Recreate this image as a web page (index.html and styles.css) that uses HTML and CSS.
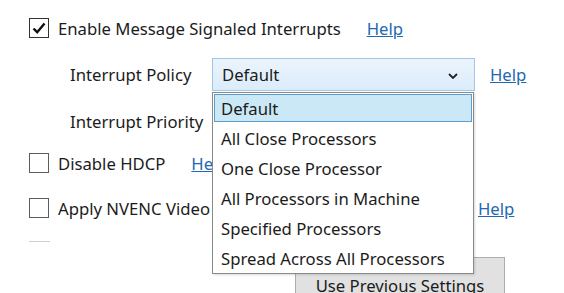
FILE: index.html
```html
<!DOCTYPE html>
<html lang="en">
<head>
  <meta charset="UTF-8" />
  <title>Interrupt Settings</title>
  <link rel="stylesheet" href="styles.css">
</head>
<body>
  <div class="settings">
    <div class="row check-row first">
      <span class="box checked">
        <svg width="16" height="16" viewBox="0 0 16 16"><path d="M2.5 8.5 L6.2 12.2 L13.5 3.5" fill="none" stroke="#111" stroke-width="2.4"/></svg>
      </span>
      <span class="label">Enable Message Signaled Interrupts</span>
      <a class="help gap-wide" href="#">Help</a>
    </div>

    <div class="row sub-row policy">
      <span class="sub-label">Interrupt Policy</span>
      <div class="combo">
        <span>Default</span>
        <svg class="chev" width="10" height="6" viewBox="0 0 10 6"><path d="M1 1 L5 5 L9 1" fill="none" stroke="#222" stroke-width="1.8"/></svg>
        <ul class="dropdown">
          <li class="selected">Default</li>
          <li>All Close Processors</li>
          <li>One Close Processor</li>
          <li>All Processors in Machine</li>
          <li>Specified Processors</li>
          <li>Spread Across All Processors</li>
        </ul>
      </div>
      <a class="help gap-narrow" href="#">Help</a>
    </div>

    <div class="row sub-row priority">
      <span class="sub-label">Interrupt Priority</span>
    </div>

    <div class="row check-row hdcp">
      <span class="box"></span>
      <span class="label">Disable HDCP</span>
      <a class="help gap-wide" href="#">Help</a>
    </div>

    <div class="row check-row nvenc">
      <span class="box"></span>
      <span class="label nvenc-label">Apply NVENC Video Encoder Fix</span>
      <a class="help nvenc-help" href="#">Help</a>
    </div>

    <div class="cut-line"></div>

    <div class="actions">
      <button class="prev-btn">Use Previous Settings</button>
    </div>
  </div>
</body>
</html>
```

FILE: styles.css
```css
:root {
  --text: #1b1b1b;
  --link: #2169b3;
  --box-border: #5c5c5c;
}

html, body {
  margin: 0;
  height: 100%;
  overflow: hidden;
  background: #fff;
}

body {
  font-family: 'Noto Sans', 'Open Sans', sans-serif;
  font-size: 16.7px;
  color: var(--text);
}

.settings {
  padding-left: 29px;
}

.row {
  display: flex;
  align-items: center;
}

.check-row {
  height: 20px;
}

.first {
  margin-top: 18px;
}

.box {
  width: 20px;
  height: 20px;
  box-sizing: border-box;
  border: 1px solid var(--box-border);
  display: flex;
  align-items: center;
  justify-content: center;
  flex: none;
}

.box.checked {
  border-color: #333;
}

.label {
  margin-left: 9px;
  white-space: nowrap;
}

.help {
  color: var(--link);
  text-decoration: underline;
  white-space: nowrap;
}

.gap-wide {
  margin-left: 26px;
}

.gap-narrow {
  margin-left: 15px;
}

.sub-row {
  padding-left: 41px;
  height: 33px;
}

.policy {
  margin-top: 20px;
}

.priority {
  margin-top: 14px;
}

.sub-label {
  width: 142px;
  flex: none;
}

.combo {
  position: relative;
  width: 263px;
  height: 33px;
  box-sizing: border-box;
  border: 1px solid #a3c6e6;
  background: linear-gradient(#ebf4fc, #dbecfc);
  display: flex;
  align-items: center;
  padding-left: 9px;
}

.chev {
  position: absolute;
  right: 16px;
  top: 14px;
}

.dropdown {
  position: absolute;
  left: -1px;
  top: 33px;
  width: 262px;
  margin: 0;
  padding: 0;
  list-style: none;
  background: #fff;
  border: 1px solid #8a8a8a;
  box-sizing: border-box;
  z-index: 5;
  box-shadow: 1px 1px 2px rgba(0, 0, 0, 0.15);
}

.dropdown li {
  height: 30px;
  padding-left: 8px;
  display: flex;
  align-items: center;
  white-space: nowrap;
}

.dropdown li.selected {
  background: #cbe8f6;
  box-shadow: inset 0 0 0 1px #fff, inset 0 0 0 2px #5e9bcf;
}

.hdcp {
  margin-top: 15px;
}

.nvenc {
  margin-top: 25px;
}

.nvenc-label {
  width: 154px;
  flex: none;
  overflow: hidden;
}

.nvenc-help {
  margin-left: 266px;
}

.cut-line {
  margin-top: 23px;
  width: 21px;
  height: 1px;
  background: #cfcfcf;
}

.actions {
  margin-top: 15px;
  padding-left: 266px;
}

.prev-btn {
  width: 210px;
  height: 50px;
  font-family: inherit;
  font-size: 16.7px;
  color: var(--text);
  background: #e1e1e1;
  border: 1px solid #adadad;
  padding: 16px 0 0;
  display: flex;
  align-items: flex-start;
  justify-content: center;
}
```
